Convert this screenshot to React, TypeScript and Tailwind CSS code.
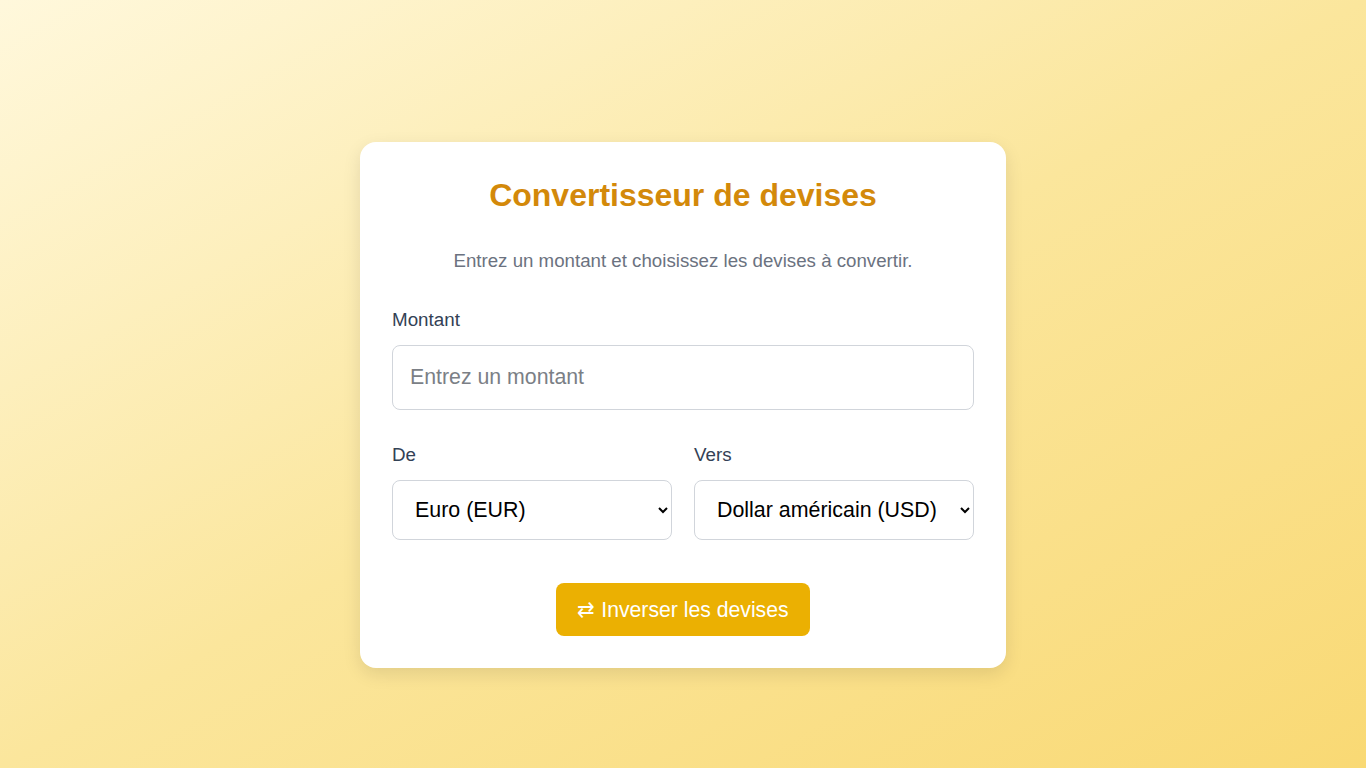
import React, { useState } from 'react';

const currencies = [
  { code: 'EUR', name: 'Euro (EUR)' },
  { code: 'USD', name: 'Dollar américain (USD)' },
  { code: 'GBP', name: 'Livre sterling (GBP)' },
  { code: 'JPY', name: 'Yen japonais (JPY)' },
  { code: 'CHF', name: 'Franc suisse (CHF)' },
];

export default function App() {
  const [amount, setAmount] = useState('');
  const [from, setFrom] = useState('EUR');
  const [to, setTo] = useState('USD');

  const swap = () => {
    setFrom(to);
    setTo(from);
  };

  return (
    <div
      className="min-h-screen w-full flex items-center justify-center pt-[42px] bg-gradient-to-br from-[#fff8dc] via-[#fbe69c] to-[#f9d974]"
      style={{ fontFamily: '"Liberation Sans", Arial, sans-serif' }}
    >
      <div className="w-[646px] bg-white rounded-2xl shadow-[0_6px_18px_rgba(0,0,0,0.1)] px-8 pt-8 pb-8">
        <h1 className="text-center text-[32px] font-bold text-[#d3890a] leading-[38px] mt-[2px]">
          Convertisseur de devises
        </h1>
        <p className="text-center text-[18.7px] text-[#6b7280] leading-6 mt-[35px]">
          Entrez un montant et choisissez les devises à convertir.
        </p>

        <div className="mt-[35px]">
          <label className="block text-[18.8px] text-[#334155] leading-6">Montant</label>
          <input
            type="number"
            value={amount}
            onChange={e => setAmount(e.target.value)}
            placeholder="Entrez un montant"
            className="mt-[13px] w-full h-[65px] px-[17px] text-[21.3px] border border-[#d1d5db] rounded-lg outline-none placeholder:text-[#7b7f86]"
          />
        </div>

        <div className="mt-[33px] grid grid-cols-2 gap-[22px]">
          <div>
            <label className="block text-[18.8px] text-[#334155] leading-6">De</label>
            <select
              value={from}
              onChange={e => setFrom(e.target.value)}
              className="mt-[13px] w-full h-[60px] pl-[18px] pr-[6px] text-[21.4px] text-black bg-white border border-[#d1d5db] rounded-lg outline-none"
            >
              {currencies.map(c => (
                <option key={c.code} value={c.code}>{c.name}</option>
              ))}
            </select>
          </div>
          <div>
            <label className="block text-[18.8px] text-[#334155] leading-6">Vers</label>
            <select
              value={to}
              onChange={e => setTo(e.target.value)}
              className="mt-[13px] w-full h-[60px] pl-[18px] pr-[6px] text-[21.4px] text-black bg-white border border-[#d1d5db] rounded-lg outline-none"
            >
              {currencies.map(c => (
                <option key={c.code} value={c.code}>{c.name}</option>
              ))}
            </select>
          </div>
        </div>

        <div className="mt-[43px] flex justify-center">
          <button
            onClick={swap}
            className="h-[53px] w-[254px] rounded-lg bg-[#ebb002] text-white text-[21.2px]"
          >
            ⇄ Inverser les devises
          </button>
        </div>
      </div>
    </div>
  );
}
